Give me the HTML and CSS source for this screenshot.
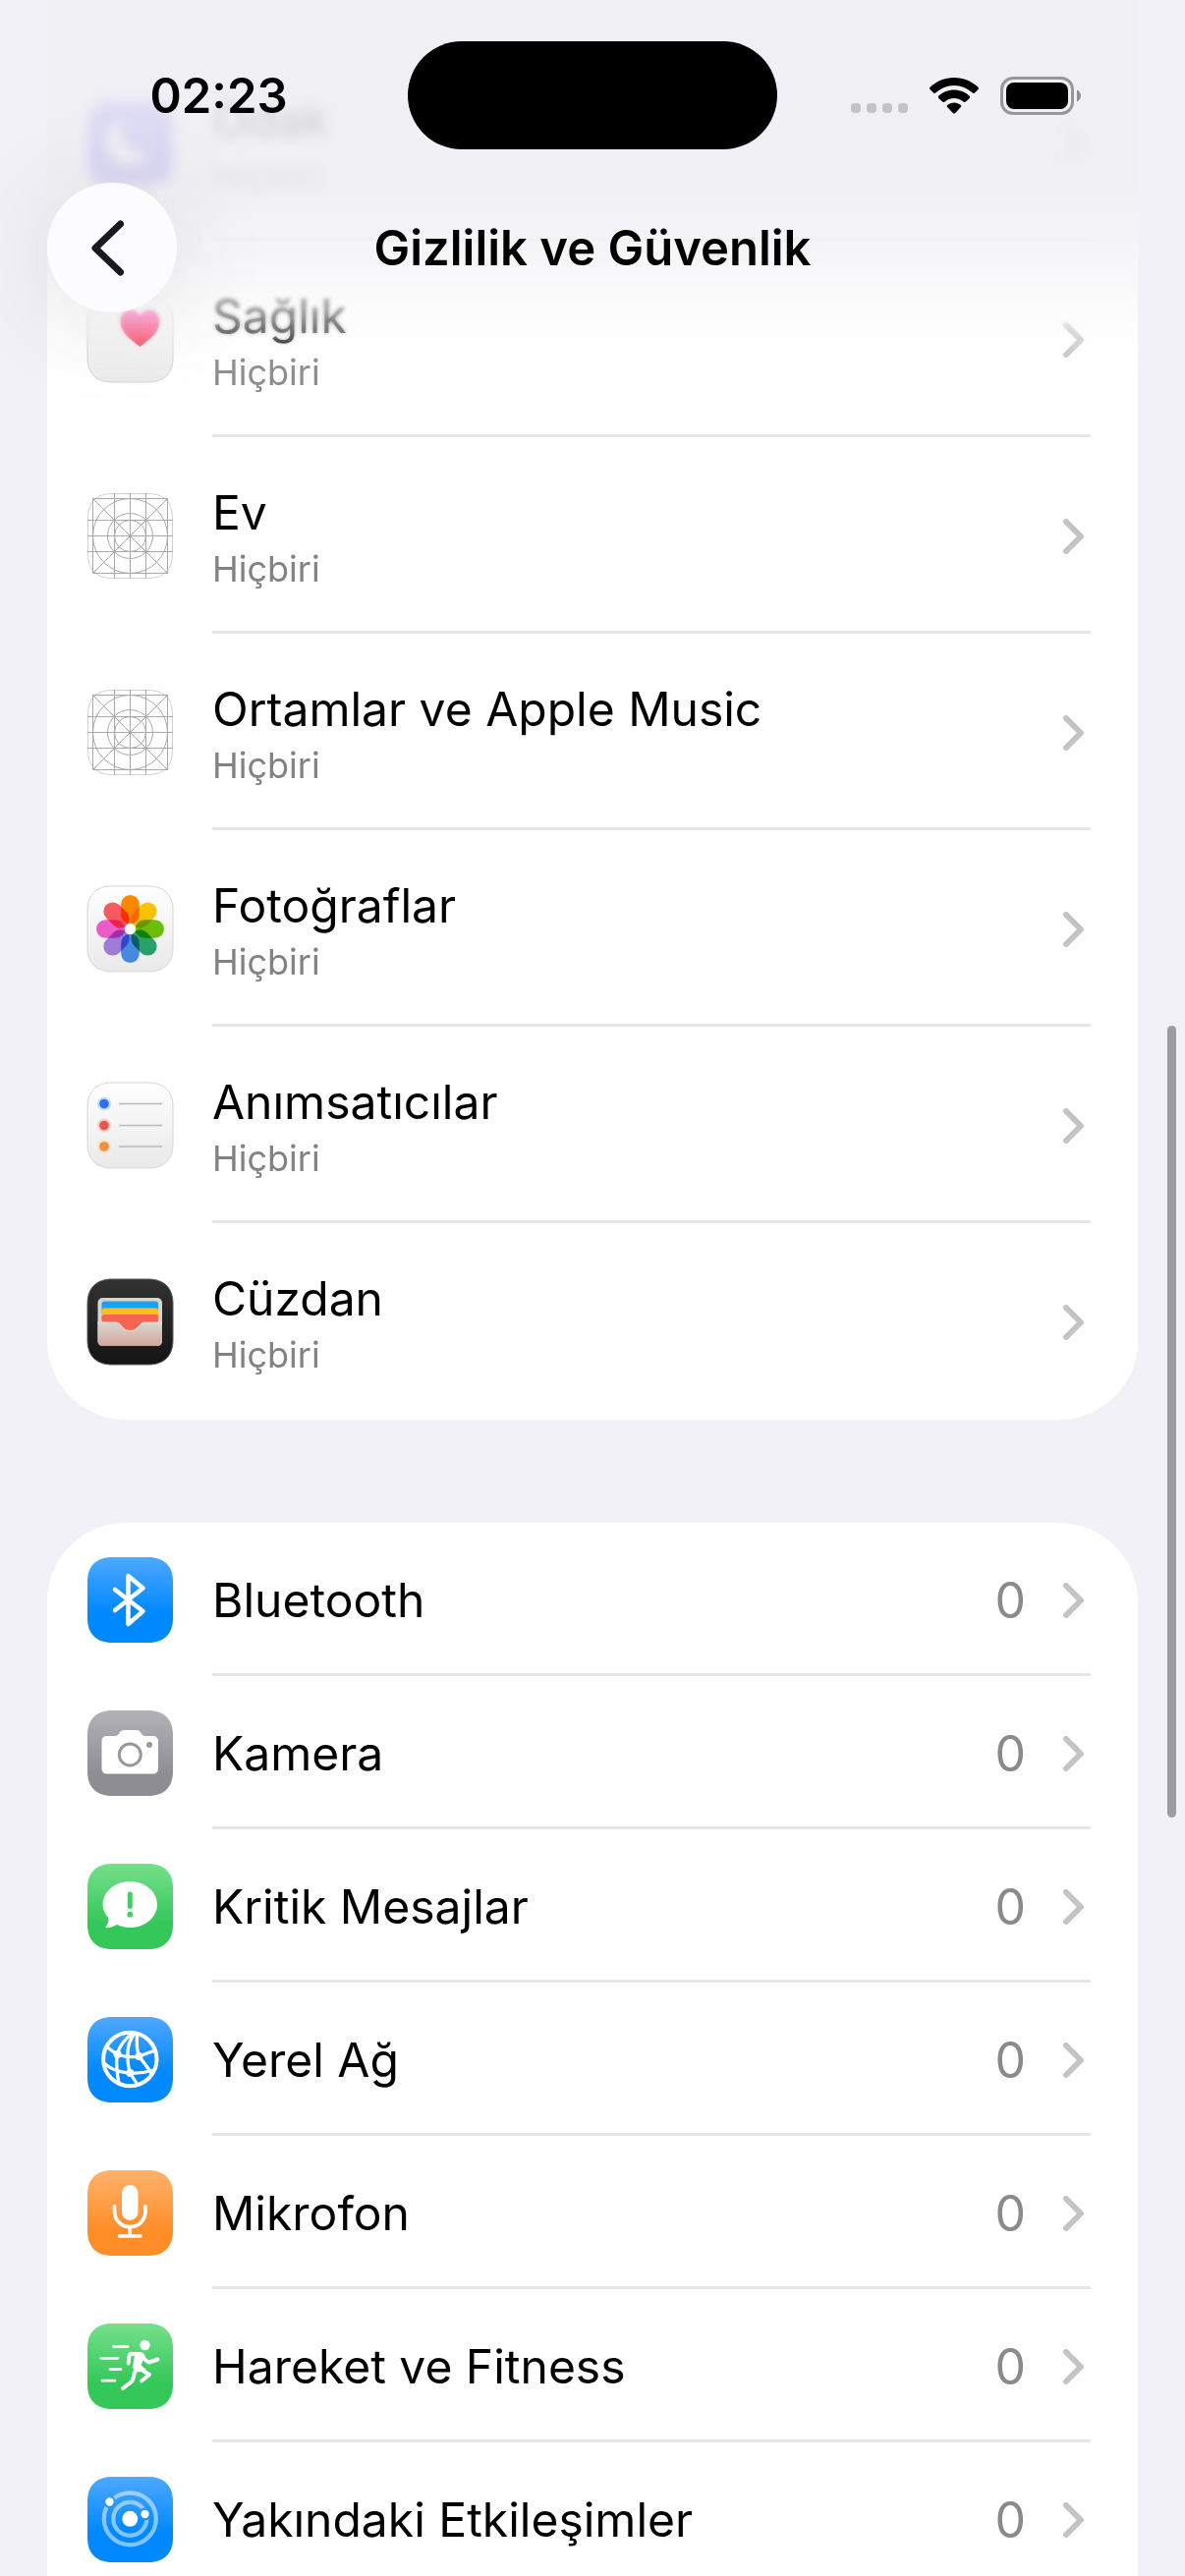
FILE: index.html
```html
<!DOCTYPE html>
<html lang="tr">
<head>
  <meta charset="UTF-8">
  <meta name="viewport" content="width=device-width, initial-scale=1.0">
  <title>Gizlilik ve Güvenlik</title>
  <link rel="stylesheet" href="styles.css">
</head>
<body>
  <!-- shared gradients and symbols -->
  <svg class="defs" aria-hidden="true">
    <defs>
      <linearGradient id="blue" x1="0" y1="0" x2="0" y2="1"><stop offset="0" stop-color="#4fa8ff"/><stop offset=".65" stop-color="#0088ff"/></linearGradient>
      <linearGradient id="gray" x1="0" y1="0" x2="0" y2="1"><stop offset="0" stop-color="#b3b2b8"/><stop offset=".75" stop-color="#8e8d93"/></linearGradient>
      <linearGradient id="green" x1="0" y1="0" x2="0" y2="1"><stop offset="0" stop-color="#76e08b"/><stop offset=".7" stop-color="#34c759"/></linearGradient>
      <linearGradient id="orange" x1="0" y1="0" x2="0" y2="1"><stop offset="0" stop-color="#ffb26b"/><stop offset=".7" stop-color="#ff8d28"/></linearGradient>
      <linearGradient id="indigo" x1="0" y1="0" x2="0" y2="1"><stop offset="0" stop-color="#8583f5"/><stop offset=".7" stop-color="#6155f5"/></linearGradient>
      <linearGradient id="white" x1="0" y1="0" x2="0" y2="1"><stop offset="0" stop-color="#ffffff"/><stop offset="1" stop-color="#e9e9e9"/></linearGradient>
      <linearGradient id="black" x1="0" y1="0" x2="0" y2="1"><stop offset="0" stop-color="#323232"/><stop offset="1" stop-color="#141414"/></linearGradient>
      <linearGradient id="heart" x1="0" y1="0" x2="0" y2="1"><stop offset="0" stop-color="#ff5fc0"/><stop offset="1" stop-color="#ff3340"/></linearGradient>
      <linearGradient id="pocket" x1="0" y1="0" x2="0" y2="1"><stop offset="0" stop-color="#dcd5cf"/><stop offset="1" stop-color="#cfa79d"/></linearGradient>
      <path id="tile" d="M25 0H62C78 0 87 9 87 25V62C87 78 78 87 62 87H25C9 87 0 78 0 62V25C0 9 9 0 25 0Z"/>
      <rect id="petal" x="-9.300" y="-34.500" width="18.600" height="29.500" rx="9.300"/>
      <symbol id="chevron" viewBox="0 0 22 36"><path d="M3 3L18 18L3 33" fill="none" stroke="currentColor" stroke-width="6" stroke-linecap="round" stroke-linejoin="round"/></symbol>
      <symbol id="grid" viewBox="0 0 87 87">
        <g fill="none" stroke="#a9a9a9">
          <path d="M25.5 .5H61.5C78 .5 86.5 9 86.5 25.5V61.5C86.5 78 78 86.5 61.5 86.5H25.5C9 86.5 .5 78 .5 61.5V25.5C.5 9 9 .5 25.5 .5Z" stroke="#d0d0d0"/>
          <path d="M0 27.5H87M0 43.5H87M0 59.5H87M27.5 0V87M43.5 0V87M59.5 0V87M5.5 5.5H81.5V81.5H5.5ZM5.5 5.5L81.5 81.5M81.5 5.5L5.5 81.5"/>
          <circle cx="43.5" cy="43.5" r="38"/><circle cx="43.5" cy="43.5" r="23"/><circle cx="43.5" cy="43.5" r="16"/>
        </g>
      </symbol>
      <mask id="orbit">
        <rect width="87" height="87" fill="#fff"/>
        <circle cx="22.5" cy="25.5" r="6.5"/><circle cx="58.5" cy="38" r="6.5"/>
      </mask>
    </defs>
  </svg>

  <header class="header">
    <div class="blur blur-strong"></div>
    <div class="blur blur-soft"></div>
    <div class="tint"></div>
    <div class="status">
      <div class="time">02:23</div>
      <div class="island"></div>
      <div class="indicators">
        <svg class="signal" viewBox="0 0 58 38" fill="#c4c4c8"><rect y="27" width="10" height="10" rx="4"/><rect x="16" y="27" width="10" height="10" rx="4"/><rect x="32" y="27" width="10" height="10" rx="4"/><rect x="48" y="27" width="10" height="10" rx="4"/></svg>
        <svg class="wifi" viewBox="0 0 50 37"><path d="M25 0C34.500 0 43 3.700 49.400 9.700C50.100 10.400 50.100 11.400 49.500 12.100L46 15.600C45.400 16.200 44.500 16.200 43.800 15.600C38.800 11 32.200 8 25 8S11.200 11 6.200 15.600C5.500 16.200 4.600 16.200 4 15.600L.5 12.100C-.1 11.400-.1 10.400.6 9.700C7 3.700 15.500 0 25 0ZM25 12.500C31 12.500 36.500 14.800 40.600 18.600C41.300 19.200 41.300 20.200 40.700 20.900L36.900 24.600C36.300 25.200 35.400 25.200 34.700 24.700C32.100 22.400 28.700 21 25 21S17.900 22.400 15.300 24.700C14.600 25.200 13.700 25.200 13.100 24.600L9.300 20.900C8.700 20.200 8.700 19.200 9.400 18.600C13.500 14.800 19 12.500 25 12.500ZM25 25.500C27.600 25.500 30 26.400 31.800 28C32.500 28.600 32.500 29.500 31.900 30.100L26.200 36C25.500 36.700 24.500 36.700 23.800 36L18.100 30.100C17.500 29.500 17.500 28.600 18.200 28C20 26.400 22.400 25.500 25 25.500Z"/></svg>
        <svg class="battery" viewBox="0 0 82 39"><rect x="1.500" y="1.500" width="72" height="36" rx="11.500" fill="none" stroke="#98989c" stroke-width="3"/><rect x="6" y="6" width="63" height="27" rx="8"/><path d="M78 13.500C80.400 14.600 82 17 82 19.500S80.400 24.400 78 25.500Z" fill="#8e8e92"/></svg>
      </div>
    </div>
    <div class="nav">
      <button class="back" type="button" aria-label="Geri">
        <svg viewBox="0 0 34 57"><path d="M29.500 4L4 28.500L29.500 53" fill="none" stroke="#1a1a1c" stroke-width="7" stroke-linecap="round" stroke-linejoin="round"/></svg>
      </button>
      <h1>Gizlilik ve Güvenlik</h1>
    </div>
  </header>

  <main class="list">
    <section class="card card-top">
      <div class="row-tail"></div>
      <a class="row" href="#">
        <svg class="icon" viewBox="0 0 87 87"><use href="#tile" fill="url(#indigo)"/><path d="M35 19C29 37 40 57 64 53C58 65 42 70 29 62C15 52 16 27 35 19Z" fill="#fff"/></svg>
        <div class="body"><div class="text"><span class="name">Odak</span><span class="sub">Hiçbiri</span></div><svg class="chevron"><use href="#chevron"/></svg></div>
      </a>
      <a class="row" href="#">
        <svg class="icon" viewBox="0 0 87 87"><use href="#tile" fill="url(#white)" stroke="#cfcfcf"/><path d="M53.500 51C43 43 33.500 36 33.500 25C33.500 18 38 13.500 44 13.500C48 13.500 51.500 15.500 53.500 19C55.500 15.500 59 13.500 63 13.500C69 13.500 73.500 18 73.500 25C73.500 36 64 43 53.500 51Z" fill="url(#heart)"/></svg>
        <div class="body"><div class="text"><span class="name">Sağlık</span><span class="sub">Hiçbiri</span></div><svg class="chevron"><use href="#chevron"/></svg></div>
      </a>
      <a class="row" href="#">
        <svg class="icon" viewBox="0 0 87 87"><use href="#grid"/></svg>
        <div class="body"><div class="text"><span class="name">Ev</span><span class="sub">Hiçbiri</span></div><svg class="chevron"><use href="#chevron"/></svg></div>
      </a>
      <a class="row" href="#">
        <svg class="icon" viewBox="0 0 87 87"><use href="#grid"/></svg>
        <div class="body"><div class="text"><span class="name">Ortamlar ve Apple Music</span><span class="sub">Hiçbiri</span></div><svg class="chevron"><use href="#chevron"/></svg></div>
      </a>
      <a class="row" href="#">
        <svg class="icon" viewBox="0 0 87 87">
          <use href="#tile" fill="url(#white)" stroke="#d6d6d6"/>
          <g class="petals" transform="translate(43.500 43.500)">
            <use href="#petal" fill="#ff8a00"/>
            <use href="#petal" fill="#ffc800" transform="rotate(45)"/>
            <use href="#petal" fill="#71c60a" transform="rotate(90)"/>
            <use href="#petal" fill="#2bab70" transform="rotate(135)"/>
            <use href="#petal" fill="#4a93f2" transform="rotate(180)"/>
            <use href="#petal" fill="#a983e4" transform="rotate(225)"/>
            <use href="#petal" fill="#f75fd0" transform="rotate(270)"/>
            <use href="#petal" fill="#ff5b62" transform="rotate(315)"/>
          </g>
          <circle cx="43.500" cy="43.500" r="5.500" fill="#fff"/>
        </svg>
        <div class="body"><div class="text"><span class="name">Fotoğraflar</span><span class="sub">Hiçbiri</span></div><svg class="chevron"><use href="#chevron"/></svg></div>
      </a>
      <a class="row" href="#">
        <svg class="icon" viewBox="0 0 87 87">
          <use href="#tile" fill="url(#white)" stroke="#d6d6d6"/>
          <path d="M32 21.500H76M32 43.500H76M32 65H76" stroke="#b9b9b9" stroke-width="1.500"/>
          <circle cx="17" cy="21.500" r="7" fill="#bfe0fb"/><circle cx="17" cy="21.500" r="4.800" fill="#2f6ef5"/>
          <circle cx="17" cy="43.500" r="7" fill="#f9cfcb"/><circle cx="17" cy="43.500" r="4.800" fill="#e9564c"/>
          <circle cx="17" cy="65" r="7" fill="#f7dfc4"/><circle cx="17" cy="65" r="4.800" fill="#ee9040"/>
        </svg>
        <div class="body"><div class="text"><span class="name">Anımsatıcılar</span><span class="sub">Hiçbiri</span></div><svg class="chevron"><use href="#chevron"/></svg></div>
      </a>
      <a class="row row-last" href="#">
        <svg class="icon" viewBox="0 0 87 87">
          <use href="#tile" fill="url(#black)" stroke="#5a5a5a"/>
          <rect x="10.500" y="19" width="65.500" height="49" rx="5" fill="#d8d4cc"/>
          <rect x="14.500" y="22.500" width="57.500" height="14" rx="2.500" fill="#1f9ff0"/>
          <rect x="14.500" y="29.500" width="57.500" height="14" rx="2.500" fill="#fcc01e"/>
          <rect x="14.500" y="36" width="57.500" height="20" rx="2.500" fill="#fb6350"/>
          <path d="M10.500 44H28C36 44 34 52.500 43.500 52.500S51 44 59 44H76V63C76 66 74 68 71 68H15.500C12.500 68 10.500 66 10.500 63Z" fill="url(#pocket)"/>
          <path d="M10.500 44H28C36 44 34 52.500 43.500 52.500S51 44 59 44H76" fill="none" stroke="#f3e6df"/>
        </svg>
        <div class="body"><div class="text"><span class="name">Cüzdan</span><span class="sub">Hiçbiri</span></div><svg class="chevron"><use href="#chevron"/></svg></div>
      </a>
    </section>

    <section class="card card-bottom">
      <a class="row row-small" href="#">
        <svg class="icon" viewBox="0 0 87 87"><use href="#tile" fill="url(#blue)"/><path d="M28 33L56.500 55L41.500 68V19L56.500 31.500L28 54" fill="none" stroke="#fff" stroke-width="4.500" stroke-linecap="round" stroke-linejoin="round"/></svg>
        <div class="body"><span class="name">Bluetooth</span><span class="count">0</span><svg class="chevron"><use href="#chevron"/></svg></div>
      </a>
      <a class="row row-small" href="#">
        <svg class="icon" viewBox="0 0 87 87"><use href="#tile" fill="url(#gray)"/><path d="M20 26H28C30.500 26 31.500 24.500 32.500 23C34 20.800 35 20 37 20H50C52 20 53 20.800 54.500 23C55.500 24.500 56.500 26 59 26H66.500C70 26 72 28 72 31.500V59C72 62.500 70 64.500 66.500 64.500H20C16.500 64.500 14.500 62.500 14.500 59V31.500C14.500 28 16.500 26 20 26Z" fill="#fff"/><circle cx="43.300" cy="45" r="11" fill="none" stroke="#98979d" stroke-width="3"/><circle cx="63" cy="35" r="3" fill="#98979d"/></svg>
        <div class="body"><span class="name">Kamera</span><span class="count">0</span><svg class="chevron"><use href="#chevron"/></svg></div>
      </a>
      <a class="row row-small" href="#">
        <svg class="icon" viewBox="0 0 87 87"><use href="#tile" fill="url(#green)"/><path d="M43.300 18C58.500 18 71 28.500 71 41.500S58.500 65 43.300 65C38.500 65 34 64 30 62C26.500 64 23 65.500 19.500 65.300C18.300 65.200 18 64.300 18.800 63.500C21.500 61 22 57.500 20.800 54.500C17.500 51 15.600 46.500 15.600 41.500C15.600 28.500 28 18 43.300 18Z" fill="#fff"/><path d="M43.300 31V43.500" stroke="#46cd66" stroke-width="5" stroke-linecap="round"/><circle cx="43.300" cy="51.700" r="2.900" fill="#46cd66"/></svg>
        <div class="body"><span class="name">Kritik Mesajlar</span><span class="count">0</span><svg class="chevron"><use href="#chevron"/></svg></div>
      </a>
      <a class="row row-small" href="#">
        <svg class="icon" viewBox="0 0 87 87"><use href="#tile" fill="url(#blue)"/><g fill="none" stroke="#fff" stroke-width="3.300"><circle cx="43.300" cy="43" r="27.200" stroke-width="4"/><path d="M47 16Q34 25 30 38Q29 54 32 67M49 16Q40 26 41 40Q41 50 43.500 57L51 69M51 16Q49 30 52.500 40L63 54Q65 57 65 59M19 30L30 38Q42 42 52.500 40L69 34M17 47Q24 53 30 54.500Q38 57 43.500 57Q55 58 67 54"/></g><g fill="#fff"><circle cx="30.500" cy="38" r="4"/><circle cx="52.500" cy="40" r="4"/><circle cx="43.500" cy="57" r="4"/></g></svg>
        <div class="body"><span class="name">Yerel Ağ</span><span class="count">0</span><svg class="chevron"><use href="#chevron"/></svg></div>
      </a>
      <a class="row row-small" href="#">
        <svg class="icon" viewBox="0 0 87 87"><use href="#tile" fill="url(#orange)"/><rect x="35" y="15" width="16.500" height="36" rx="8.250" fill="#fff"/><path d="M27.500 36.500V41.500C27.500 51 34.500 57.500 43.250 57.500S59 51 59 41.500V36.500M43.250 57.500V67M32.500 67H54" fill="none" stroke="#fff" stroke-width="3.700" stroke-linecap="round"/></svg>
        <div class="body"><span class="name">Mikrofon</span><span class="count">0</span><svg class="chevron"><use href="#chevron"/></svg></div>
      </a>
      <a class="row row-small" href="#">
        <svg class="icon" viewBox="0 0 87 87"><use href="#tile" fill="url(#green)"/><circle cx="58.500" cy="22" r="5.200" fill="#fff"/><g fill="none" stroke="#fff" stroke-linecap="round" stroke-linejoin="round"><path d="M26.500 23.500H41M14 35.300H31M23 46.700H34M15 58.200H28" stroke-width="2.800"/><path d="M49 31H43.500Q42 33 41.700 40.500M55 32Q59 38 62.500 39.500L71.500 36.500M51.500 45L63 52L55 58.500M47.800 50Q47 57 44.500 59.500L36 66" stroke-width="4"/></g><path d="M43 29H54Q58 30 58.500 33L54.500 42.500L60 47L50 50Q45 47 46.500 41L48 33Z" fill="#fff"/></svg>
        <div class="body"><span class="name">Hareket ve Fitness</span><span class="count">0</span><svg class="chevron"><use href="#chevron"/></svg></div>
      </a>
      <a class="row row-small" href="#">
        <svg class="icon" viewBox="0 0 87 87"><use href="#tile" fill="url(#blue)"/><g mask="url(#orbit)" fill="none" stroke="#fff" stroke-opacity=".5" stroke-width="4.300"><circle cx="43.300" cy="42.800" r="17"/><circle cx="43.300" cy="42.800" r="26.500"/></g><g fill="#fff"><circle cx="43.300" cy="42.800" r="8"/><circle cx="22.500" cy="25.500" r="4.200"/><circle cx="58.500" cy="38" r="4.200"/></g></svg>
        <div class="body"><span class="name">Yakındaki Etkileşimler</span><span class="count">0</span><svg class="chevron"><use href="#chevron"/></svg></div>
      </a>
    </section>
  </main>
  <div class="scroll-indicator"></div>
</body>
</html>
```
FILE: styles.css
```css
* {
  box-sizing: border-box;
}
body {
  margin: 0;
  height: 100vh;
  overflow: hidden;
  background: #f2f1f7;
  color: #000;
  font-family: Inter, "Noto Sans", sans-serif;
  font-size: 48px;
}
.defs {
  position: absolute;
  width: 0;
  height: 0;
}

/* header */
.header {
  position: fixed;
  top: 0;
  left: 0;
  right: 0;
  z-index: 1;
  height: 440px;
  padding-top: 42px;
}
.blur,
.tint {
  position: absolute;
  inset: 0 48px;
  z-index: -1;
}
.blur-strong {
  backdrop-filter: blur(6px);
  -webkit-mask-image: linear-gradient(#000 190px, transparent 260px);
  mask-image: linear-gradient(#000 190px, transparent 260px);
}
.blur-soft {
  backdrop-filter: blur(2px);
  -webkit-mask-image: linear-gradient(#000 310px, transparent 360px);
  mask-image: linear-gradient(#000 310px, transparent 360px);
}
.tint {
  background: linear-gradient(
    rgba(238, 237, 243, 0.86) 0,
    rgba(238, 237, 243, 0.86) 190px,
    rgba(243, 243, 246, 0.75) 260px,
    rgba(249, 249, 250, 0.55) 315px,
    rgba(252, 252, 252, 0.15) 360px,
    rgba(255, 255, 255, 0) 430px
  );
}
.status {
  display: grid;
  grid-template-columns: 1fr 376px 1fr;
  align-items: center;
}
.time {
  padding-left: 30px;
  text-align: center;
  font-size: 49px;
  font-weight: 600;
}
.island {
  height: 110px;
  border-radius: 55px;
  background: #000;
}
.indicators {
  display: flex;
  justify-content: center;
  align-items: center;
  gap: 22px;
  padding-right: 32px;
}
.signal {
  width: 58px;
  height: 38px;
}
.wifi {
  width: 50px;
  height: 37px;
}
.battery {
  width: 82px;
  height: 39px;
}
.nav {
  display: grid;
  grid-template-columns: 132px 1fr 132px;
  align-items: center;
  margin-top: 34px;
  padding: 0 48px;
}
.nav h1 {
  margin: 0;
  text-align: center;
  font-size: 49px;
  font-weight: 600;
}
.back {
  display: flex;
  justify-content: center;
  align-items: center;
  width: 132px;
  height: 132px;
  padding: 0 8px 0 0;
  border: 0;
  border-radius: 50%;
  background: #fcfcff;
  box-shadow: 0 8px 110px rgba(0, 0, 0, 0.1);
}
.back svg {
  width: 34px;
  height: 57px;
}

/* list */
.list {
  display: flex;
  flex-direction: column;
  gap: 105px;
  padding: 0 48px;
}
.card {
  background: #fff;
}
.card-top {
  border-radius: 0 0 80px 80px;
}
.card-bottom {
  border-radius: 80px 80px 0 0;
}
.row-tail {
  height: 45px;
  margin: 0 48px 0 168px;
  border-bottom: 3px solid #e6e6e6;
}
.row {
  display: flex;
  align-items: center;
  gap: 40px;
  padding: 0 48px 0 41px;
  color: inherit;
  text-decoration: none;
}
.icon {
  flex: none;
  width: 87px;
  height: 87px;
  margin-top: 1px;
  overflow: visible;
}
.petals use {
  mix-blend-mode: multiply;
}
.body {
  flex: 1;
  display: flex;
  align-items: center;
  gap: 38px;
  height: 200px;
  padding: 2px 6px 0 0;
  box-shadow: inset 0 -3px #e6e6e6;
}
.row-small .body {
  height: 156px;
}
.row-last .body {
  box-shadow: none;
}
.text,
.row-small .name {
  flex: 1;
}
.name {
  display: block;
  line-height: 66px;
}
.sub {
  display: block;
  font-size: 36px;
  line-height: 48px;
  color: #828282;
}
.count {
  font-size: 50px;
  color: #8a8a8e;
}
.chevron {
  width: 22px;
  height: 36px;
  color: #c4c4c6;
}

.scroll-indicator {
  position: fixed;
  top: 1044px;
  right: 9px;
  z-index: 2;
  width: 9px;
  height: 806px;
  border-radius: 5px;
  background: #9c9ba1;
}
```
